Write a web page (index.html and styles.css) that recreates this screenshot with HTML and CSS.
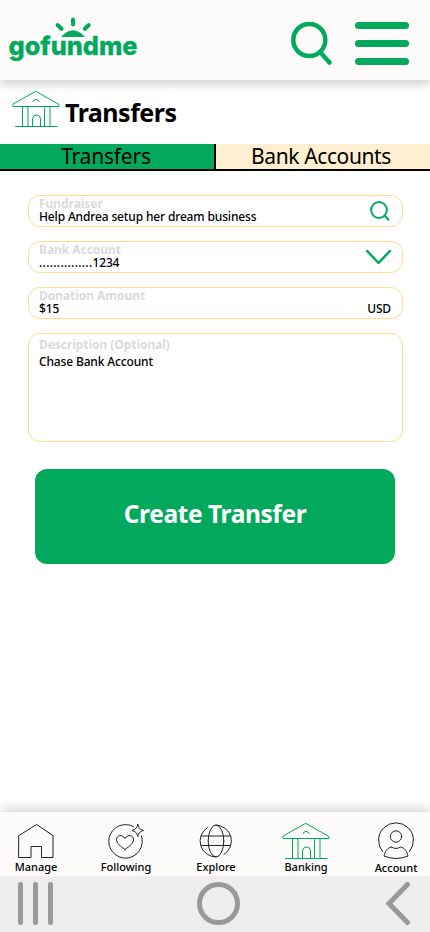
FILE: index.html
```html
<!DOCTYPE html>
<html lang="en">
<head>
<meta charset="utf-8">
<title>Transfers</title>
<link rel="stylesheet" href="styles.css">
</head>
<body>
<svg class="defs" width="0" height="0" aria-hidden="true">
  <symbol id="bank" viewBox="0 0 50 38">
    <path d="M25 1.5 48 14.5V16.5H2V14.5ZM11.500 16.500V36.500M17 36.500V18.500L16 16.500M39 16.500V36.500M33.500 36.500V18.500L34.500 16.500M4.500 36.500H46M21.500 36.500V29a4 4 0 0 1 8 0V36.500M22 11.500a3.200 3.200 0 0 1 6 0"/>
  </symbol>
</svg>
<div class="screen">
  <header class="top">
    <svg class="logo" width="140" height="56" viewBox="0 0 140 56">
      <text class="wordmark" x="8.500" y="44" textLength="129" lengthAdjust="spacingAndGlyphs">gofundme</text>
      <path class="sun" d="M61 26Q73 12.500 85 26Z"/>
      <path class="rays" d="M73 8.500V13.500M57.600 14 61.500 17.800M88.800 14 84.900 17.800"/>
    </svg>
    <svg class="find" width="44" height="46" viewBox="0 0 44 46"><circle cx="20.300" cy="19" r="16"/><path d="M31 31 40.500 41.500"/></svg>
    <div class="menu"><i></i><i></i><i></i></div>
  </header>
  <main>
    <div class="title"><svg class="bank" width="50" height="38"><use href="#bank"/></svg><h1>Transfers</h1></div>
    <nav class="tabs"><a class="tab on"><span>Transfers</span></a><a class="tab"><span>Bank Accounts</span></a></nav>
    <form class="form">
      <div class="field"><div><label>Fundraiser</label><p>Help Andrea setup her dream business</p></div>
        <svg class="small-find" width="22" height="22" viewBox="0 0 22 22"><circle cx="10" cy="9" r="7.900"/><path d="M15.500 14.500 19.500 18.800"/></svg></div>
      <div class="field"><div><label>Bank Account</label><p><span class="dots">...............</span>1234</p></div>
        <svg class="chevron" width="27" height="17" viewBox="0 0 27 17"><path d="M3.200 2 14.500 14 25.800 2"/></svg></div>
      <div class="field"><div><label>Donation Amount</label><p>$15</p></div><p class="usd">USD</p></div>
      <div class="field area"><div><label>Description (Optional)</label><p>Chase Bank Account</p></div></div>
      <button type="button">Create Transfer</button>
    </form>
  </main>
  <footer>
    <nav class="nav">
      <a><svg width="50" height="38" viewBox="0 0 50 38"><path d="M8 13.500 25.500 2.500 42 13.500V35.500H30.500V24.500H20V35.500H8Z"/></svg><span>Manage</span></a>
      <a><svg width="50" height="38" viewBox="0 0 50 38"><path d="M32.500 4.500A16.800 16.800 0 1 0 40.500 14M24 27.500C19 24 15.500 21 15.500 17.500 15.500 13 21.500 12 24 16.500 26.500 12 32.500 13 32.500 17.500 32.500 21 29 24 24 27.500ZM36.800 2.500Q37.500 7.500 42.500 8.500 37.500 9.500 36.800 14.500 36 9.500 31 8.500 36 7.500 36.800 2.500Z"/></svg><span>Following</span></a>
      <a><svg width="50" height="38" viewBox="0 0 50 38"><ellipse cx="25" cy="19" rx="7.800" ry="16"/><path d="M16.500 5.500A16 16 0 0 0 25 35M25 3A16 16 0 0 1 33 32.500M10.300 14H39.700M10.300 23.500H39.700"/></svg><span>Explore</span></a>
      <a><svg class="bank" width="50" height="38"><use href="#bank"/></svg><span>Banking</span></a>
      <a class="account"><svg width="50" height="38" viewBox="0 0 50 38"><path d="M11.500 29.500A17.500 17.500 0 1 1 38.500 29.500M20.500 25Q25 28 29.500 25C34 26 36 29.500 37 34Q25 39 13 34C14 29.500 16 26 20.500 25"/><circle cx="25" cy="14.500" r="5.700"/></svg><span>Account</span></a>
    </nav>
    <div class="system">
      <div class="recents"><i></i><i></i><i></i></div>
      <div class="home"></div>
      <svg class="back" width="28" height="44" viewBox="0 0 28 44"><path d="M23.500 2.500 5 21.500 23.500 40.500"/></svg>
    </div>
  </footer>
</div>
</body>
</html>
```
FILE: styles.css
```css
* { box-sizing: border-box; }
body, h1, p { margin: 0; }
body { background: #fff; color: #000; font-family: "Noto Sans", sans-serif; }
svg { display: block; fill: none; stroke-linecap: round; stroke-linejoin: round; flex: none; }
.defs { position: absolute; }
.screen { width: 430px; height: 932px; display: flex; flex-direction: column; overflow: hidden; }
main { flex: 1; }
span, label, p, h1 { white-space: nowrap; }

.top { height: 80px; display: flex; background: #fcfbf9; box-shadow: 0 4px 10px rgba(0,0,0,.2); }
.logo { margin-top: 11px; }
.wordmark { font: 800 26px Inter, sans-serif; fill: #02a95c; stroke: #02a95c; stroke-width: .3; }
.sun { fill: #02a95c; }
.rays { stroke: #02a95c; stroke-width: 4; }
.find { margin: 21px 0 0 149px; stroke: #02a95c; stroke-width: 4.500; }
.menu { margin: 22px 0 0 22px; width: 54px; height: 43px; display: flex; flex-direction: column; justify-content: space-between; }
.menu i { height: 7px; border-radius: 4px; background: #02a95c; }

.title { height: 64px; display: flex; padding: 10px 0 0 11px; }
.bank { stroke: #02a95c; }
h1 { margin: 4px 0 0 4px; font-size: 25px; line-height: 36px; font-weight: 700; letter-spacing: -.5px; }
.tabs { height: 27px; display: grid; grid-template-columns: 216px 1fr; border-bottom: 2px solid #000; }
.tab { display: flex; justify-content: center; padding-right: 4px; background: #ffefd1; font-size: 21px; line-height: 24px; letter-spacing: -.4px; }
.tab.on { padding-right: 2px; background: #02a95c; border-right: 2px solid #000; letter-spacing: -.2px; }

.form { padding: 24px 27px 0 28px; display: flex; flex-direction: column; gap: 14px; }
.field { height: 32px; display: flex; justify-content: space-between; padding: 0 11px 0 10px; border: 1px solid #ffdb8b; border-radius: 12px; font-size: 12px; line-height: 13px; font-weight: 500; letter-spacing: -.15px; }
.field.area { height: 109px; padding-top: 3px; }
.area p { margin-top: 4px; }
label { display: block; height: 14px; line-height: 15px; color: #dadada; font-weight: 700; letter-spacing: -.05px; }
.dots { letter-spacing: .3px; }
.small-find { margin: 5px 0 0; stroke: #02a95c; stroke-width: 2; }
.chevron { margin-top: 7px; stroke: #02a95c; stroke-width: 2.500; }
.usd { margin-top: 14px; }
button { width: 360px; height: 95px; margin: 13px 0 0 7px; border: 0; padding: 0 0 6px; border-radius: 12px; background: #02a95c; color: #fff; font: 700 24.500px "Noto Sans", sans-serif; letter-spacing: -.4px; }

.nav { height: 64px; display: flex; justify-content: space-between; padding: 10px 9px 0 11px; background: #fcfbf9; box-shadow: 0 -4px 10px rgba(0,0,0,.15); }
.nav a { width: 50px; display: flex; flex-direction: column; align-items: center; font-size: 11px; line-height: 14px; font-weight: 500; }
.nav svg { stroke: #222; stroke-width: 1; }
.nav .bank { stroke: #02a95c; }
.account span { margin-top: 1px; }
.system { height: 56px; display: flex; background: #eeecee; padding: 6px 18px 0; justify-content: space-between; }
.recents { width: 35px; height: 43px; display: flex; justify-content: space-between; }
.recents i { width: 5px; border-radius: 3px; background: #999; }
.home { width: 43px; height: 43px; border: 5px solid #999; border-radius: 50%; }
.back { stroke: #999; stroke-width: 5; stroke-linejoin: miter; }
```
